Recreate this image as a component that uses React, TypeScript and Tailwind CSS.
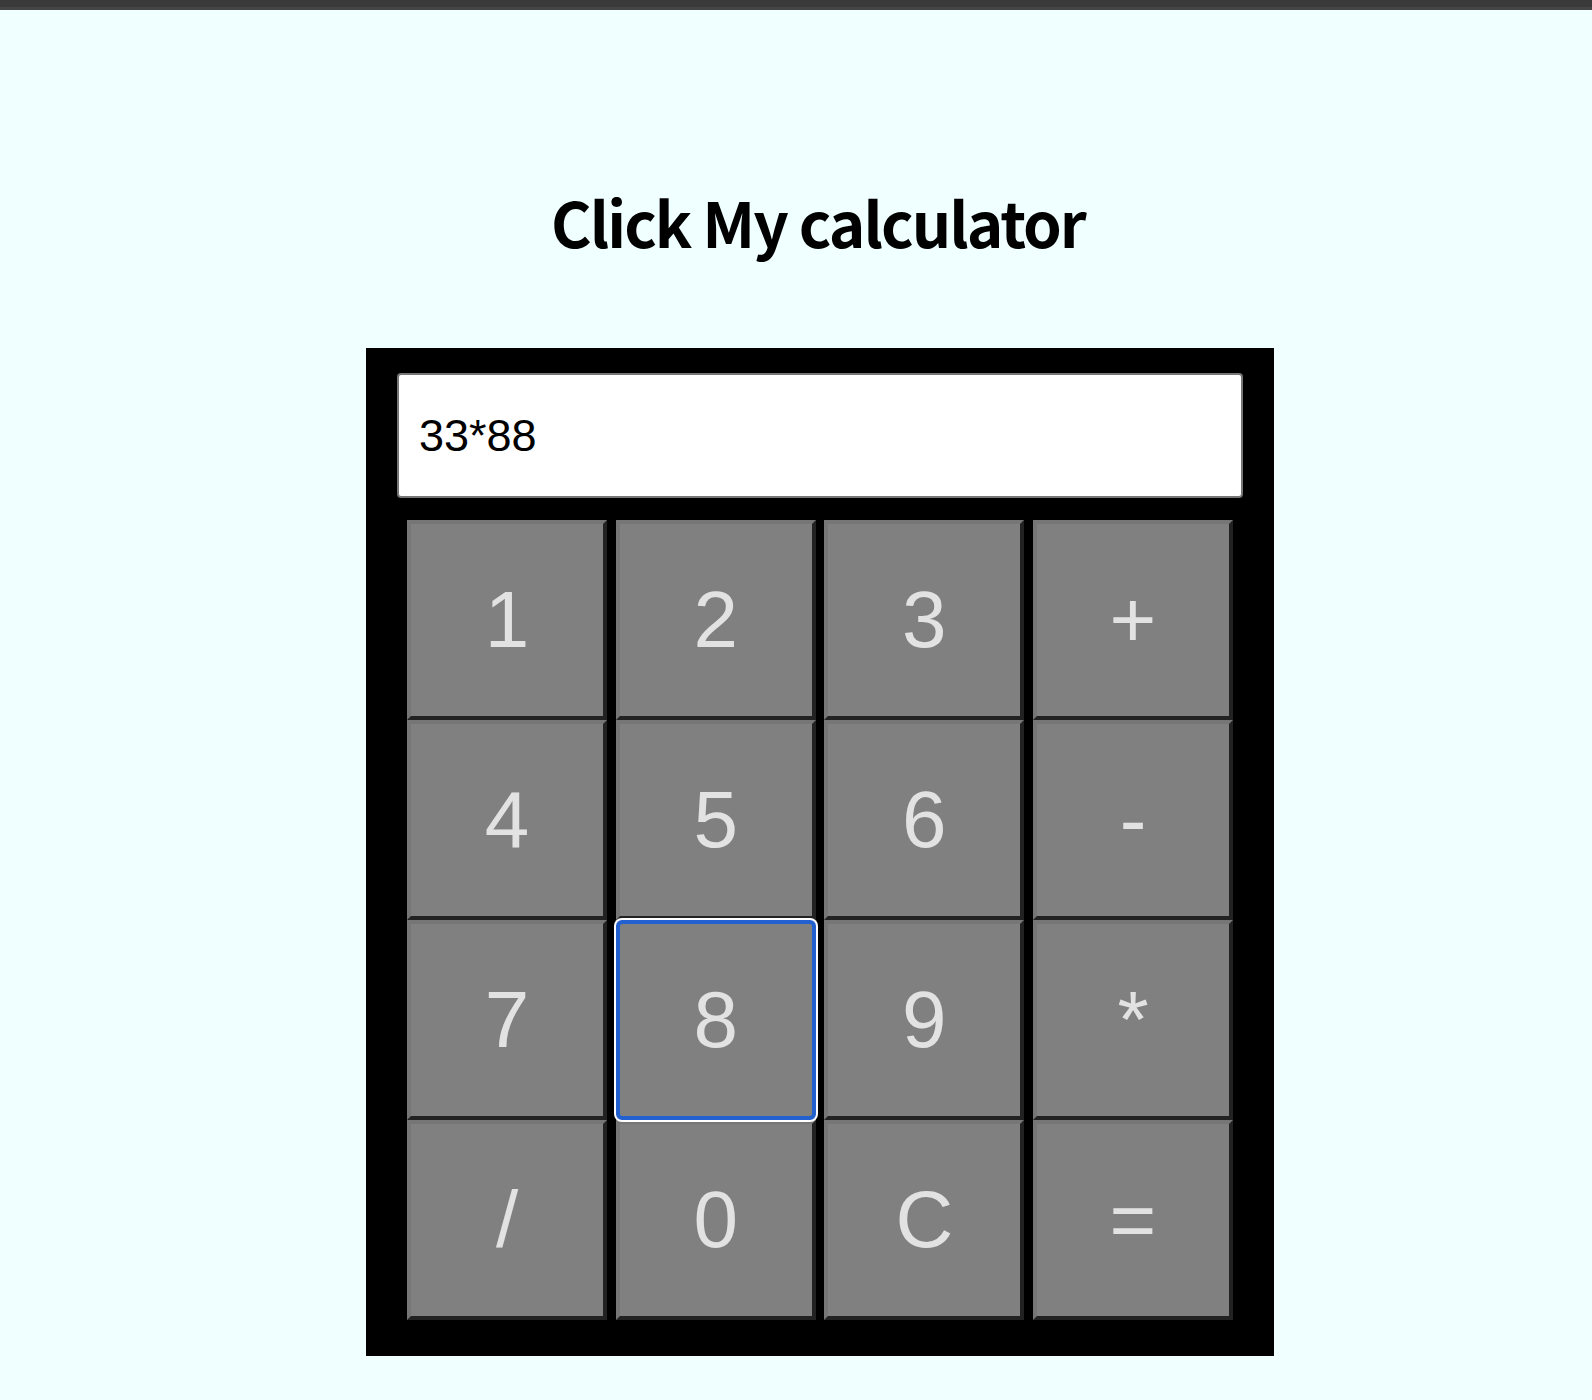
import { useState } from 'react';

const keys = ['1', '2', '3', '+', '4', '5', '6', '-', '7', '8', '9', '*', '/', '0', 'C', '='];

function CalcButton({ label, focused, onPress }: { label: string; focused?: boolean; onPress: (k: string) => void }) {
  if (focused) {
    return (
      <button
        onClick={() => onPress(label)}
        className="w-[200px] h-[200px] flex items-center justify-center bg-[#808080] text-[#e2e2e2] text-[80px] leading-none border-[4px] border-[#2360cf] rounded-[6px] shadow-[0_0_0_2px_#ffffff] outline-none z-10"
        style={{ fontFamily: '"Liberation Sans", Arial, sans-serif' }}
      >
        {label}
      </button>
    );
  }
  return (
    <button
      onClick={() => onPress(label)}
      className="w-[200px] h-[200px] flex items-center justify-center bg-[#808080] text-[#e2e2e2] text-[80px] leading-none border-[4px] border-t-[#767676] border-l-[#767676] border-r-[#222222] border-b-[#222222] outline-none"
      style={{ fontFamily: '"Liberation Sans", Arial, sans-serif' }}
    >
      {label}
    </button>
  );
}

export default function App() {
  const [display, setDisplay] = useState('33*88');

  const press = (k: string) => {
    if (k === 'C') {
      setDisplay('');
    } else if (k === '=') {
      try {
        // eslint-disable-next-line no-new-func
        setDisplay(String(Function('"use strict";return (' + display + ')')()));
      } catch {
        setDisplay('Error');
      }
    } else {
      setDisplay(display + k);
    }
  };

  return (
    <div className="min-h-screen bg-[#f0ffff]">
      <div className="h-[7px] bg-[#3a3a3a]" />
      <div className="h-[3px] bg-[#454545]" />

      <h1
        className="mt-[179px] text-center text-[62px] leading-[64px] font-bold text-black tracking-[-2px] pl-[44px]"
        style={{ fontFamily: '"Noto Sans CJK KR", "Noto Sans", sans-serif' }}
      >
        Click My calculator
      </h1>

      <div className="ml-[366px] mt-[95px] w-[908px] h-[1008px] bg-black pt-[25px] px-[31px]">
        <input
          readOnly
          value={display}
          className="w-full h-[125px] bg-white border-2 border-[#767676] rounded-[4px] pl-[20px] text-[45px] text-black outline-none"
          style={{ fontFamily: '"Liberation Sans", Arial, sans-serif' }}
        />
        <div className="ml-[10px] mt-[22px] w-[826px] flex flex-wrap justify-between">
          {keys.map(k => (
            <CalcButton key={k} label={k} focused={k === '8'} onPress={press} />
          ))}
        </div>
      </div>
    </div>
  );
}
